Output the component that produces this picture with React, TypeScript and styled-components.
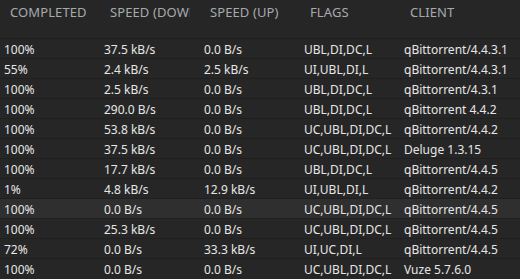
import styled, { createGlobalStyle } from "styled-components";

const GlobalStyle = createGlobalStyle`
	html, body {
		margin: 0;
		padding: 0;
		background: #262626;
	}
	body {
		font-family: "Noto Sans", "Open Sans", sans-serif;
	}
`;

const Table = styled.div`
	width: 520px;
	height: 279px;
	overflow: hidden;
	background: #262626;
	display: flex;
	flex-direction: column;
`;

const Columns = styled.div`
	display: grid;
	grid-template-columns: repeat(4, 100px) 1fr;
`;

const HeaderRow = styled(Columns)`
	height: 23px;
	align-items: center;
	margin-bottom: 15px;
`;

const HeaderCell = styled.div`
	padding-left: 10px;
`;

const HeaderLabel = styled.div`
	max-width: 80px;
	font-size: 13px;
	color: #a6aaaf;
	white-space: nowrap;
	overflow: hidden;
	letter-spacing: 0.1px;
`;

const Row = styled(Columns)<{ $active?: boolean }>`
	height: 20px;
	box-sizing: border-box;
	border-top: 1px solid #1f1f1f;
	align-items: center;
	background: ${(p) => (p.$active ? "#2f2f2f" : "transparent")};
`;

const Cell = styled.div`
	padding-left: 4px;
	padding-top: 1px;
	font-size: 12px;
	color: #e6e6e6;
	white-space: nowrap;
`;

const headers = ["COMPLETED", "SPEED (DOWN)", "SPEED (UP)", "FLAGS", "CLIENT"];

const peers = [
	["100%", "37.5 kB/s", "0.0 B/s", "UBL,DI,DC,L", "qBittorrent/4.4.3.1"],
	["55%", "2.4 kB/s", "2.5 kB/s", "UI,UBL,DI,L", "qBittorrent/4.4.3.1"],
	["100%", "2.5 kB/s", "0.0 B/s", "UBL,DI,DC,L", "qBittorrent/4.3.1"],
	["100%", "290.0 B/s", "0.0 B/s", "UBL,DI,DC,L", "qBittorrent 4.4.2"],
	["100%", "53.8 kB/s", "0.0 B/s", "UC,UBL,DI,DC,L", "qBittorrent/4.4.2"],
	["100%", "37.5 kB/s", "0.0 B/s", "UC,UBL,DI,DC,L", "Deluge 1.3.15"],
	["100%", "17.7 kB/s", "0.0 B/s", "UBL,DI,DC,L", "qBittorrent/4.4.5"],
	["1%", "4.8 kB/s", "12.9 kB/s", "UI,UBL,DI,L", "qBittorrent/4.4.2"],
	["100%", "0.0 B/s", "0.0 B/s", "UC,UBL,DI,DC,L", "qBittorrent/4.4.5"],
	["100%", "25.3 kB/s", "0.0 B/s", "UC,UBL,DI,DC,L", "qBittorrent/4.4.5"],
	["72%", "0.0 B/s", "33.3 kB/s", "UI,UC,DI,L", "qBittorrent/4.4.5"],
	["100%", "0.0 B/s", "0.0 B/s", "UC,UBL,DI,DC,L", "Vuze 5.7.6.0"],
];

export default function App(): JSX.Element {
	return (
		<>
			<GlobalStyle />
			<Table>
				<HeaderRow>
					{headers.map((h) => (
						<HeaderCell key={h}>
							<HeaderLabel>{h}</HeaderLabel>
						</HeaderCell>
					))}
				</HeaderRow>
				{peers.map((p, i) => (
					<Row key={i} $active={i === 8}>
						{p.map((v, j) => (
							<Cell key={j}>{v}</Cell>
						))}
					</Row>
				))}
			</Table>
		</>
	);
}
